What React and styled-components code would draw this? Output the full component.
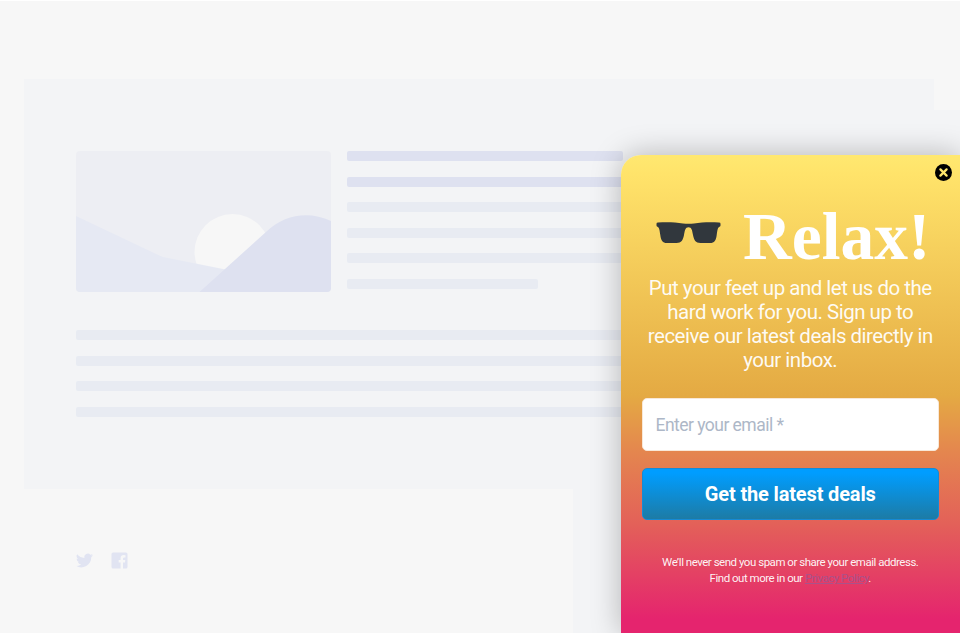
import React from "react";
import styled, { createGlobalStyle } from "styled-components";

const GlobalStyle = createGlobalStyle`
  *, *::before, *::after { box-sizing: border-box; }
  body { margin: 0; overflow: hidden; }
`;

const Page = styled.div`
  position: relative;
  width: 960px;
  height: 633px;
  overflow: hidden;
  border-top: 1px solid #fff;
  background:
    linear-gradient(#f3f4f6, #f3f4f6) 573px 488px / 387px 145px no-repeat,
    linear-gradient(#f3f4f6, #f3f4f6) 934px 109px / 26px 380px no-repeat,
    #f7f7f7;
  font-family: Roboto, sans-serif;
`;

const Content = styled.main`
  width: 910px;
  height: 410px;
  margin: 78px 0 0 24px;
  padding: 72px 52px 0;
  background: #f3f4f6;
`;

const Article = styled.section`
  display: flex;
  gap: 16px;
`;

const Artwork = styled.svg`
  display: block;
  flex: none;
  width: 255px;
  height: 141px;
`;

const Lines = styled.div`
  display: flex;
  flex-direction: column;
  gap: 15.6px;
  margin-top: ${(p) => p.$top || 0}px;
`;

const Line = styled.span`
  width: ${(p) => p.$width}px;
  height: 10px;
  border-radius: 2px;
  background: ${(p) => (p.$strong ? "#dee1f0" : "#e8ebf2")};
`;

const Social = styled.footer`
  display: flex;
  gap: 18px;
  margin: 63px 0 0 76px;
  color: #e1e4f2;
`;

const SocialIcon = styled.svg`
  width: 17px;
  height: 17px;
  fill: currentColor;
`;

const Popup = styled.aside`
  position: absolute;
  top: 154px;
  right: 0;
  width: 339.5px;
  height: 478px;
  padding: 52px 21px 0;
  display: flex;
  flex-direction: column;
  border-radius: 20px 0 0 0;
  background: linear-gradient(#ffe870 0, #ffe36a 20px, #e4aa43 240px, #e4844f 300px, #e36059 370px, #e5246e 464px);
  box-shadow: 0 0 30px rgba(0, 0, 0, 0.27);
  color: #fff;
  text-align: center;
`;

const CloseButton = styled.button`
  position: absolute;
  top: 8.5px;
  right: 8px;
  width: 17px;
  height: 17px;
  padding: 0;
  border: 0;
  background: none;
  svg { display: block; }
`;

const Heading = styled.h1`
  display: flex;
  align-items: center;
  justify-content: space-between;
  height: 60px;
  margin: 0 8.5px 0 14px;
  font: bold 67.5px/60px "Liberation Serif", serif;
`;

const Glasses = styled.svg`
  width: 65px;
  height: 22px;
  margin-top: -9px;
`;

const Title = styled.span`
  white-space: nowrap;
`;

const Message = styled.p`
  margin: 9px -10px 0;
  font-weight: 400;
  font-size: 20.5px;
  line-height: 24px;
  color: rgba(255, 255, 255, 0.94);
`;

const TextLine = styled.span`
  display: block;
  white-space: nowrap;
  letter-spacing: ${(p) => p.$spacing || 0}px;
`;

const EmailInput = styled.input`
  width: 100%;
  height: 53px;
  margin: 26px 0 17px;
  padding: 0 13px;
  border: 1px solid #f8e8d8;
  border-radius: 5px;
  background: #fff;
  font: 17.5px Roboto, sans-serif;
  letter-spacing: -0.53px;
  &::placeholder { color: #adb7c7; opacity: 1; }
`;

const SubmitButton = styled.button`
  width: 100%;
  height: 52px;
  padding: 0;
  border: 1px solid #168ad5;
  border-radius: 5px;
  background: linear-gradient(#009dff 8%, #1d7ba5);
  color: #fff;
  font: bold 20px Roboto, sans-serif;
  letter-spacing: -0.15px;
`;

const Note = styled.p`
  margin: 34px 0 0;
  font-size: 11.5px;
  line-height: 16px;
  color: rgba(255, 255, 255, 0.94);
`;

const PolicyLink = styled.a`
  color: #a9528b;
  text-decoration: underline;
`;

function Landscape() {
  return (
    <Artwork viewBox="0 0 255 141">
      <defs>
        <clipPath id="frame"><rect width="255" height="141" rx="4" /></clipPath>
      </defs>
      <g clipPath="url(#frame)">
        <rect width="255" height="141" fill="#edeef3" />
        <circle cx="156.500" cy="101" r="38" fill="#f7f7f7" />
        <path d="M0 65 78 102Q82 104 87 106L152 119V141H0Z" fill="#e6e9f3" />
        <path d="M123.500 141 190 81C209 63 233 60 255 70V141Z" fill="#dee1f0" />
      </g>
    </Artwork>
  );
}

export default function App() {
  return (
    <>
      <GlobalStyle />
      <Page>
        <Content>
          <Article>
            <Landscape />
            <Lines>
              <Line $width={276} $strong />
              <Line $width={276} $strong />
              <Line $width={276} />
              <Line $width={276} />
              <Line $width={276} />
              <Line $width={191} />
            </Lines>
          </Article>
          <Lines $top={38}>
            <Line $width={547} />
            <Line $width={547} />
            <Line $width={547} />
            <Line $width={547} />
          </Lines>
        </Content>
        <Social>
          <SocialIcon viewBox="0 0 24 24">
            <path d="M24 4.600a10 10 0 0 1-2.800.8 5 5 0 0 0 2.200-2.700 10 10 0 0 1-3.100 1.200 4.900 4.900 0 0 0-8.400 4.500A14 14 0 0 1 1.700 3.200a4.900 4.900 0 0 0 1.500 6.600 5 5 0 0 1-2.200-.6 4.900 4.900 0 0 0 3.900 4.900 5 5 0 0 1-2.200.1 4.900 4.900 0 0 0 4.600 3.400A10 10 0 0 1 0 19.500a14 14 0 0 0 21.500-12.400A10 10 0 0 0 24 4.600z" />
          </SocialIcon>
          <SocialIcon viewBox="0 0 17 17">
            <path d="M2 .5h13A1.500 1.500 0 0 1 16.500 2v13a1.500 1.500 0 0 1-1.500 1.500h-3v-6h2l.3-2.500H12V6.500q0-1 1.200-1h1.300V3.200q-4.900-.8-4.900 3V8H7.700v2.500h1.900v6H2A1.500 1.500 0 0 1 .5 15V2A1.500 1.500 0 0 1 2 .5z" />
          </SocialIcon>
        </Social>
        <Popup>
          <CloseButton aria-label="Close">
            <svg width="17" height="17" viewBox="0 0 17 17">
              <circle cx="8.500" cy="8.500" r="8.500" fill="#000" />
              <path d="m5.400 5.400 6.200 6.200m0-6.200-6.200 6.200" stroke="#ffe66c" strokeWidth="2.300" strokeLinecap="round" />
            </svg>
          </CloseButton>
          <Heading>
            <Glasses viewBox="0 0 65 22">
              <path d="M.5 1.800Q.5.600 2 .6C10-.2 19 .2 27 1.400Q32.500 2.300 38 1.400C46 .2 55-.2 63 .6Q64.500.6 64.500 1.800V3.500Q64.500 4.300 63.500 4.800C61.500 6 61.500 8 60.700 13C60 18.500 58.500 21 54 21H44.500C39.500 21 38 18 37 13C36.200 8.500 35.700 5.200 32.500 5.200S28.800 8.500 28 13C27 18 25.500 21 20.500 21H11C6.500 21 5 18.500 4.300 13C3.500 8 3.500 6 1.500 4.800Q.5 4.300.5 3.500Z" fill="#31373d" />
            </Glasses>
            <Title>Relax!</Title>
          </Heading>
          <Message>
            <TextLine $spacing={-0.5}>Put your feet up and let us do the</TextLine>
            <TextLine $spacing={-0.5}>hard work for you. Sign up to</TextLine>
            <TextLine $spacing={-0.5}>receive our latest deals directly in</TextLine>
            <TextLine $spacing={-0.5}>your inbox.</TextLine>
          </Message>
          <EmailInput placeholder="Enter your email *" />
          <SubmitButton>Get the latest deals</SubmitButton>
          <Note>
            <TextLine $spacing={-0.48}>We’ll never send you spam or share your email address.</TextLine>
            <TextLine $spacing={-0.48}>
              Find out more in our <PolicyLink>Privacy Policy</PolicyLink>.
            </TextLine>
          </Note>
        </Popup>
      </Page>
    </>
  );
}
